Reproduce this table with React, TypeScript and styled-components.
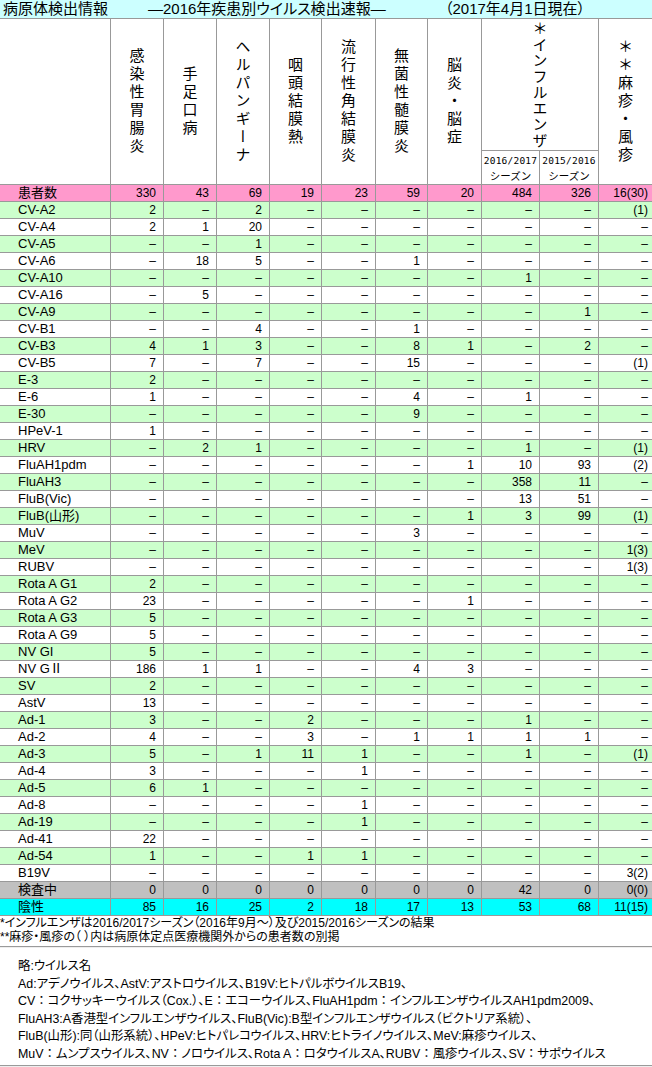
import styled, { createGlobalStyle } from "styled-components";

const line = "#999";
const jp = `"Noto Sans CJK JP", sans-serif`;
const mixed = `"Liberation Sans", "Noto Sans CJK JP", sans-serif`;

type Tone = "patients" | "green" | "white" | "pending" | "negative";

const tones: Record<Tone, string> = {
  patients: "#ff99cc",
  green: "#ccffcc",
  white: "#ffffff",
  pending: "#c0c0c0",
  negative: "#00ffff",
};

const GlobalStyle = createGlobalStyle`
  body {
    margin: 0;
    background: #fff;
    color: #000;
    font-family: ${mixed};
  }
`;

const Page = styled.div`
  width: 652px;
  overflow: hidden;
`;

const TitleBar = styled.div`
  display: flex;
  height: 18px;
  background: #ccffff;
  border-bottom: 1px solid ${line};
  font-family: ${mixed};
  font-size: 15px;
  line-height: 18px;
  font-feature-settings: "palt";
  white-space: nowrap;
`;

const TitlePart = styled.span<{ $w?: number; $pad?: number }>`
  flex: none;
  box-sizing: border-box;
  width: ${(p) => (p.$w ? `${p.$w}px` : "auto")};
  padding-left: ${(p) => p.$pad ?? 0}px;
`;

const Sheet = styled.div`
  display: grid;
  grid-template-columns: 110px 52px 52px 52px 51px 53px 51px 53px 57px 58px 53px;
  grid-template-rows: 131px 33px;
  grid-auto-rows: 16px;
  gap: 1px;
  padding-bottom: 1px;
  background: ${line};
`;

const HeadCell = styled.div<{ $rows?: number; $cols?: number }>`
  grid-row: span ${(p) => p.$rows ?? 1};
  grid-column: span ${(p) => p.$cols ?? 1};
  background: #fff;
  display: flex;
  align-items: center;
  justify-content: center;
`;

const Vertical = styled.span<{ $gap: number }>`
  writing-mode: vertical-rl;
  font-family: ${jp};
  font-size: 15px;
  line-height: 1;
  letter-spacing: ${(p) => p.$gap}px;
`;

const Season = styled.div`
  background: #fff;
  display: flex;
  flex-direction: column;
  align-items: center;
  justify-content: center;
  font-size: 9.5px;
  line-height: 15px;
  letter-spacing: 0.2px;
  font-family: "DejaVu Sans Mono", "Noto Sans CJK JP", monospace;
`;

const SeasonKana = styled.span`
  font-family: ${jp};
  font-size: 10.5px;
  letter-spacing: 0;
`;

const Label = styled.div<{ $tone: Tone }>`
  background: ${(p) => tones[p.$tone]};
  padding-left: 18px;
  font-size: 13px;
  font-family: ${mixed};
  line-height: 16px;
  white-space: nowrap;
  overflow: hidden;
`;

const Num = styled.div<{ $tone: Tone; $last?: boolean }>`
  background: ${(p) => tones[p.$tone]};
  text-align: right;
  padding-right: ${(p) => (p.$last ? 4 : 7)}px;
  font-size: 12px;
  line-height: 16px;
  white-space: nowrap;
`;

const Notes = styled.div`
  font-family: ${mixed};
  font-size: 12px;
  line-height: 14px;
  font-feature-settings: "palt";
  white-space: nowrap;
`;

const Rule = styled.div<{ $top: number }>`
  margin-top: ${(p) => p.$top}px;
  border-top: 1px solid #9a9a9a;
  border-bottom: 1px solid #eee;
`;

const Abbrev = styled.div`
  padding: 10px 0 2px 18px;
  font-family: ${mixed};
  font-size: 12.4px;
  line-height: 17.5px;
  font-feature-settings: "palt";
  white-space: nowrap;
`;

const WideColon = styled.span`
  font-feature-settings: normal;
`;

const heads: { text: string; gap: number }[] = [
  { text: "感染性胃腸炎", gap: 3 },
  { text: "手足口病", gap: 3 },
  { text: "ヘルパンギーナ", gap: 3 },
  { text: "咽頭結膜熱", gap: 3 },
  { text: "流行性角結膜炎", gap: 3 },
  { text: "無菌性髄膜炎", gap: 3 },
  { text: "脳炎・脳症", gap: 3 },
];

const rows: [string, string][] = [
  ["CV-A2", "2 – 2 – – – – – – (1)"],
  ["CV-A4", "2 1 20 – – – – – – –"],
  ["CV-A5", "– – 1 – – – – – – –"],
  ["CV-A6", "– 18 5 – – 1 – – – –"],
  ["CV-A10", "– – – – – – – 1 – –"],
  ["CV-A16", "– 5 – – – – – – – –"],
  ["CV-A9", "– – – – – – – – 1 –"],
  ["CV-B1", "– – 4 – – 1 – – – –"],
  ["CV-B3", "4 1 3 – – 8 1 – 2 –"],
  ["CV-B5", "7 – 7 – – 15 – – – (1)"],
  ["E-3", "2 – – – – – – – – –"],
  ["E-6", "1 – – – – 4 – 1 – –"],
  ["E-30", "– – – – – 9 – – – –"],
  ["HPeV-1", "1 – – – – – – – – –"],
  ["HRV", "– 2 1 – – – – 1 – (1)"],
  ["FluAH1pdm", "– – – – – – 1 10 93 (2)"],
  ["FluAH3", "– – – – – – – 358 11 –"],
  ["FluB(Vic)", "– – – – – – – 13 51 –"],
  ["FluB(山形)", "– – – – – – 1 3 99 (1)"],
  ["MuV", "– – – – – 3 – – – –"],
  ["MeV", "– – – – – – – – – 1(3)"],
  ["RUBV", "– – – – – – – – – 1(3)"],
  ["Rota A G1", "2 – – – – – – – – –"],
  ["Rota A G2", "23 – – – – – 1 – – –"],
  ["Rota A G3", "5 – – – – – – – – –"],
  ["Rota A G9", "5 – – – – – – – – –"],
  ["NV GI", "5 – – – – – – – – –"],
  ["NV GⅡ", "186 1 1 – – 4 3 – – –"],
  ["SV", "2 – – – – – – – – –"],
  ["AstV", "13 – – – – – – – – –"],
  ["Ad-1", "3 – – 2 – – – 1 – –"],
  ["Ad-2", "4 – – 3 – 1 1 1 1 –"],
  ["Ad-3", "5 – 1 11 1 – – 1 – (1)"],
  ["Ad-4", "3 – – – 1 – – – – –"],
  ["Ad-5", "6 1 – – – – – – – –"],
  ["Ad-8", "– – – – 1 – – – – –"],
  ["Ad-19", "– – – – 1 – – – – –"],
  ["Ad-41", "22 – – – – – – – – –"],
  ["Ad-54", "1 – – 1 1 – – – – –"],
  ["B19V", "– – – – – – – – – 3(2)"],
];

const totals: { label: string; tone: Tone; values: string }[] = [
  { label: "患者数", tone: "patients", values: "330 43 69 19 23 59 20 484 326 16(30)" },
];

const tail: { label: string; tone: Tone; values: string }[] = [
  { label: "検査中", tone: "pending", values: "0 0 0 0 0 0 0 42 0 0(0)" },
  { label: "陰性", tone: "negative", values: "85 16 25 2 18 17 13 53 68 11(15)" },
];

// "：" marks a full-width colon, ":" a narrow one
const abbrevLines = [
  "略:ウイルス名",
  "Ad:アデノウイルス、AstV:アストロウイルス、B19V:ヒトパルボウイルスB19、",
  "CV：コクサッキーウイルス（Cox.）、E：エコーウイルス、FluAH1pdm：インフルエンザウイルスAH1pdm2009、",
  "FluAH3:A香港型インフルエンザウイルス、FluB(Vic):B型インフルエンザウイルス（ビクトリア系統）、",
  "FluB(山形):同（山形系統）、HPeV:ヒトパレコウイルス、HRV:ヒトライノウイルス、MeV:麻疹ウイルス、",
  "MuV：ムンプスウイルス、NV：ノロウイルス、Rota A：ロタウイルスA、RUBV：風疹ウイルス、SV：サポウイルス",
];

function AbbrevLine({ text }: { text: string }) {
  const parts = text.split("：");
  return (
    <div>
      {parts.map((p, i) => (
        <span key={i}>
          {i > 0 && <WideColon>：</WideColon>}
          {p}
        </span>
      ))}
    </div>
  );
}

function DataRow({ label, values, tone }: { label: string; values: string; tone: Tone }) {
  const cells = values.split(" ");
  return (
    <>
      <Label $tone={tone}>{label}</Label>
      {cells.map((v, i) => (
        <Num key={i} $tone={tone} $last={i === cells.length - 1}>
          {v}
        </Num>
      ))}
    </>
  );
}

export default function App() {
  return (
    <Page>
      <GlobalStyle />
      <TitleBar>
        <TitlePart $w={148} $pad={3}>病原体検出情報</TitlePart>
        <TitlePart $w={297}>―2016年疾患別ウイルス検出速報―</TitlePart>
        <TitlePart>（2017年4月1日現在）</TitlePart>
      </TitleBar>

      <Sheet>
        <HeadCell $rows={2} />
        {heads.map((h) => (
          <HeadCell key={h.text} $rows={2}>
            <Vertical $gap={h.gap}>{h.text}</Vertical>
          </HeadCell>
        ))}
        <HeadCell $cols={2}>
          <Vertical $gap={1}>＊インフルエンザ</Vertical>
        </HeadCell>
        <HeadCell $rows={2}>
          <Vertical $gap={3}>＊＊麻疹・風疹</Vertical>
        </HeadCell>
        <Season>
          <span>2016/2017</span>
          <SeasonKana>シーズン</SeasonKana>
        </Season>
        <Season>
          <span>2015/2016</span>
          <SeasonKana>シーズン</SeasonKana>
        </Season>

        {totals.map((t) => (
          <DataRow key={t.label} label={t.label} values={t.values} tone={t.tone} />
        ))}
        {rows.map(([label, values], i) => (
          <DataRow key={label} label={label} values={values} tone={i % 2 === 0 ? "green" : "white"} />
        ))}
        {tail.map((t) => (
          <DataRow key={t.label} label={t.label} values={t.values} tone={t.tone} />
        ))}
      </Sheet>

      <Notes>
        <div>*インフルエンザは2016/2017シーズン（2016年9月～）及び2015/2016シーズンの結果</div>
        <div>**麻疹・風疹の（ ）内は病原体定点医療機関外からの患者数の別掲</div>
      </Notes>
      <Rule $top={2} />

      <Abbrev>
        {abbrevLines.map((l) => (
          <AbbrevLine key={l} text={l} />
        ))}
      </Abbrev>
      <Rule $top={0} />
    </Page>
  );
}
